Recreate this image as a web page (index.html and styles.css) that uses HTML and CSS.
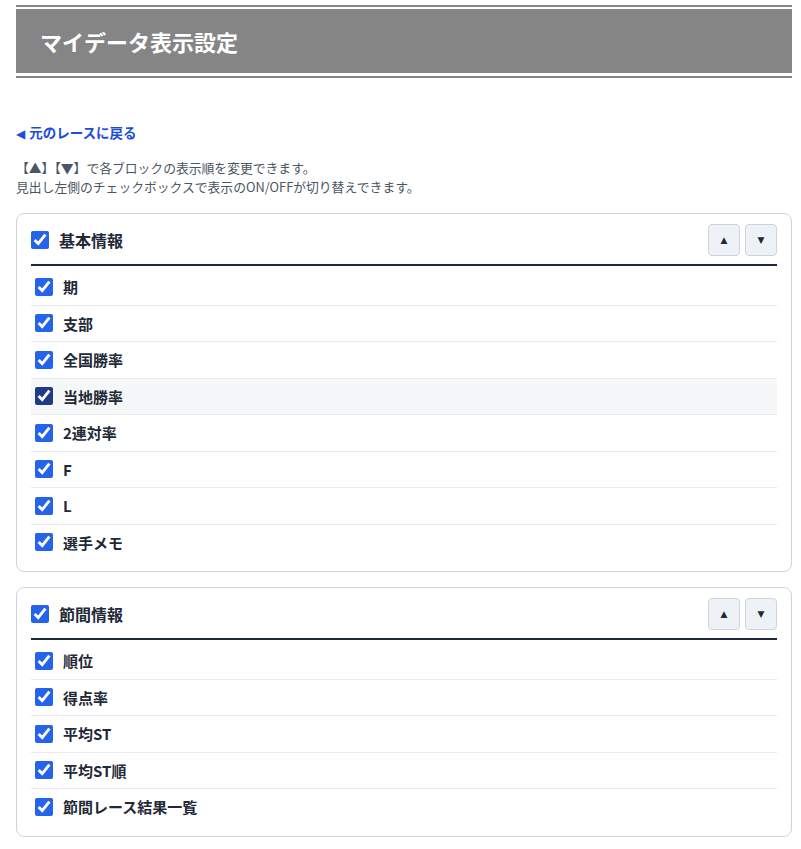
FILE: index.html
```html
<!DOCTYPE html>
<html lang="ja">
<head>
    <meta charset="UTF-8">
    <meta name="viewport" content="width=device-width, initial-scale=1.0">
    <title>マイデータ表示設定</title>
    <link rel="stylesheet" href="styles.css">
</head>
<body>
    <div class="page">
        <div class="page-header">
            <h1 class="page-title">マイデータ表示設定</h1>
        </div>

        <a class="back-link" href="#"><span class="back-arrow">◀</span>元のレースに戻る</a>

        <p class="note">
            【▲】【▼】で各ブロックの表示順を変更できます。<br>
            見出し左側のチェックボックスで表示のON/OFFが切り替えできます。
        </p>

        <!-- 基本情報ブロック -->
        <div class="block">
            <div class="block-head">
                <label class="block-title">
                    <input type="checkbox" checked>
                    基本情報
                </label>
                <div class="order-buttons">
                    <button type="button" class="order-btn">▲</button>
                    <button type="button" class="order-btn">▼</button>
                </div>
            </div>
            <ul class="item-list">
                <li class="item"><label><input type="checkbox" checked>期</label></li>
                <li class="item"><label><input type="checkbox" checked>支部</label></li>
                <li class="item"><label><input type="checkbox" checked>全国勝率</label></li>
                <li class="item is-hover"><label><input type="checkbox" checked>当地勝率</label></li>
                <li class="item"><label><input type="checkbox" checked>2連対率</label></li>
                <li class="item"><label><input type="checkbox" checked>F</label></li>
                <li class="item"><label><input type="checkbox" checked>L</label></li>
                <li class="item"><label><input type="checkbox" checked>選手メモ</label></li>
            </ul>
        </div>

        <!-- 節間情報ブロック -->
        <div class="block">
            <div class="block-head">
                <label class="block-title">
                    <input type="checkbox" checked>
                    節間情報
                </label>
                <div class="order-buttons">
                    <button type="button" class="order-btn">▲</button>
                    <button type="button" class="order-btn">▼</button>
                </div>
            </div>
            <ul class="item-list">
                <li class="item"><label><input type="checkbox" checked>順位</label></li>
                <li class="item"><label><input type="checkbox" checked>得点率</label></li>
                <li class="item"><label><input type="checkbox" checked>平均ST</label></li>
                <li class="item"><label><input type="checkbox" checked>平均ST順</label></li>
                <li class="item"><label><input type="checkbox" checked>節間レース結果一覧</label></li>
            </ul>
        </div>
    </div>
</body>
</html>
```

FILE: styles.css
```css
body {
    margin: 0;
    padding: 0;
    background-color: #fff;
    font-family: "Noto Sans CJK JP", "Noto Sans", sans-serif;
    color: #1f2937;
}
.page {
    width: 776px;
    margin-left: 16px;
    padding-top: 5px;
}
.page-header {
    border-top: 2px solid #858585;
    border-bottom: 2px solid #858585;
    padding: 2px 0 3px;
}
.page-title {
    margin: 0;
    height: 64px;
    padding-left: 24px;
    display: flex;
    align-items: center;
    background-color: #858585;
    color: #fff;
    font-size: 22px;
    font-weight: bold;
}
.back-link {
    display: block;
    height: 20px;
    margin-top: 44px;
    line-height: 20px;
    font-size: 13.5px;
    font-weight: bold;
    color: #1d4ed8;
    text-decoration: none;
}
.back-arrow {
    display: inline-block;
    margin-right: 4px;
    line-height: 1;
    font-size: 12px;
    font-family: "DejaVu Sans", sans-serif;
}
.note {
    margin: 16px 0 0;
    font-size: 12.8px;
    line-height: 19px;
    color: #4b5563;
}
.block {
    margin-top: 17px;
    border: 1px solid #cbd5e1;
    border-radius: 8px;
    padding: 10px 14px 11px;
}
.block + .block {
    margin-top: 15px;
}
.block-head {
    display: flex;
    align-items: center;
    justify-content: space-between;
    padding-bottom: 8px;
    border-bottom: 2px solid #1e293b;
}
.block-title {
    display: flex;
    align-items: center;
    gap: 10px;
    font-size: 16px;
    font-weight: bold;
    color: #1f2937;
}
input[type="checkbox"] {
    width: 18px;
    height: 18px;
    margin: 0;
    accent-color: #2563eb;
}
.order-buttons {
    display: flex;
    gap: 5px;
}
.order-btn {
    width: 32px;
    height: 32px;
    padding: 0;
    border: 1px solid #cbd5e1;
    border-radius: 4px;
    background-color: #eef1f6;
    color: #1e293b;
    font-size: 9px;
    font-family: "DejaVu Sans", sans-serif;
    cursor: pointer;
}
.item-list {
    list-style: none;
    margin: 0;
    padding: 3px 0 0;
}
.item {
    height: 35.5px;
    padding: 0 4px;
    display: flex;
    align-items: center;
    border-bottom: 1px solid #e8ebf0;
}
.item:last-child {
    border-bottom: none;
}
.item label {
    display: flex;
    align-items: center;
    gap: 10px;
    font-size: 15px;
    font-weight: bold;
    color: #1f2937;
}
.item.is-hover {
    background-color: #f6f7f9;
}
.item.is-hover input[type="checkbox"] {
    accent-color: #1e3a8a;
}
```
